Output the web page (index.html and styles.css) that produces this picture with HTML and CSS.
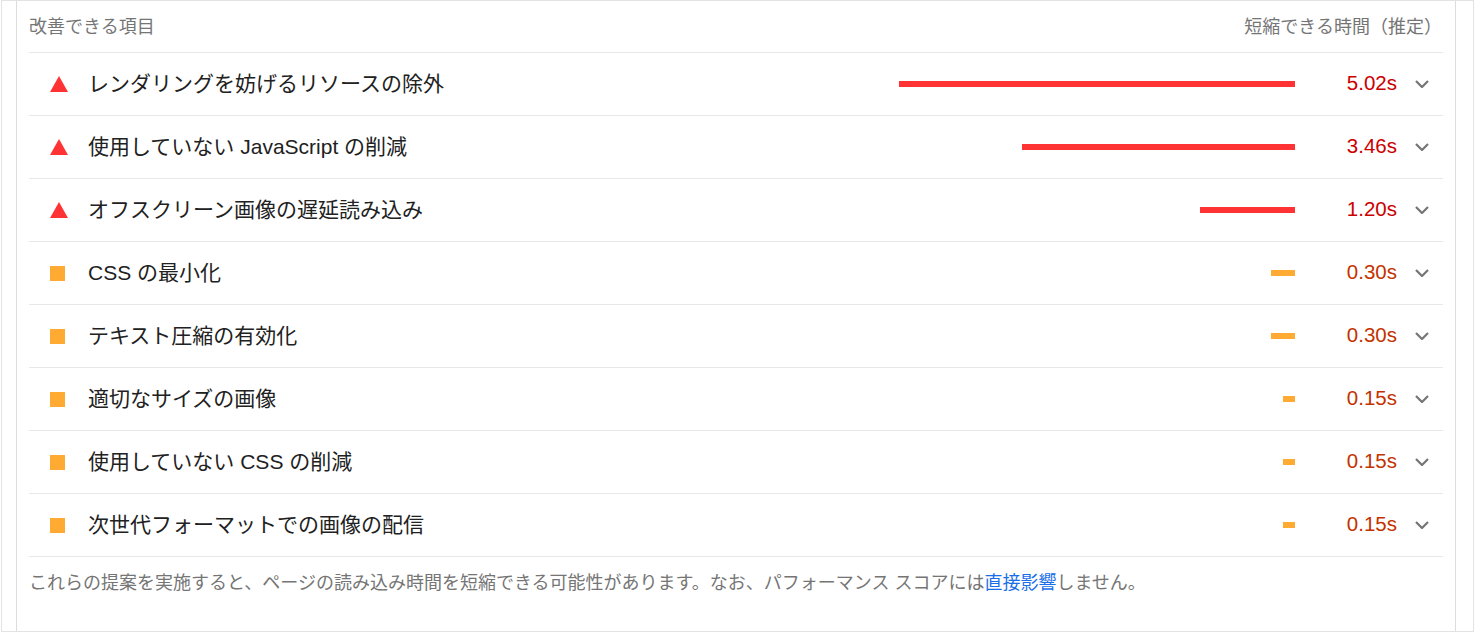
FILE: index.html
```html
<!DOCTYPE html>
<html lang="ja">
<head>
<meta charset="utf-8">
<title>改善できる項目</title>
<link rel="stylesheet" href="styles.css">
</head>
<body>
<div class="frame">
  <div class="panel">
    <div class="head">
      <span class="head-left">改善できる項目</span>
      <span class="head-right">短縮できる時間（推定）</span>
    </div>

    <div class="row fail">
      <span class="icon"><svg width="18" height="16" viewBox="0 0 18 16"><polygon points="9,0 18,16 0,16"/></svg></span>
      <span class="title">レンダリングを妨げるリソースの除外</span>
      <span class="bar" style="width:396px"></span>
      <span class="value">5.02s</span>
      <span class="chev"><svg width="14" height="8" viewBox="0 0 14 8"><polyline points="1,1 7,7 13,1"/></svg></span>
    </div>

    <div class="row fail">
      <span class="icon"><svg width="18" height="16" viewBox="0 0 18 16"><polygon points="9,0 18,16 0,16"/></svg></span>
      <span class="title">使用していない JavaScript の削減</span>
      <span class="bar" style="width:273px"></span>
      <span class="value">3.46s</span>
      <span class="chev"><svg width="14" height="8" viewBox="0 0 14 8"><polyline points="1,1 7,7 13,1"/></svg></span>
    </div>

    <div class="row fail">
      <span class="icon"><svg width="18" height="16" viewBox="0 0 18 16"><polygon points="9,0 18,16 0,16"/></svg></span>
      <span class="title">オフスクリーン画像の遅延読み込み</span>
      <span class="bar" style="width:95px"></span>
      <span class="value">1.20s</span>
      <span class="chev"><svg width="14" height="8" viewBox="0 0 14 8"><polyline points="1,1 7,7 13,1"/></svg></span>
    </div>

    <div class="row avg">
      <span class="icon"><span class="square"></span></span>
      <span class="title">CSS の最小化</span>
      <span class="bar" style="width:24px"></span>
      <span class="value">0.30s</span>
      <span class="chev"><svg width="14" height="8" viewBox="0 0 14 8"><polyline points="1,1 7,7 13,1"/></svg></span>
    </div>

    <div class="row avg">
      <span class="icon"><span class="square"></span></span>
      <span class="title">テキスト圧縮の有効化</span>
      <span class="bar" style="width:24px"></span>
      <span class="value">0.30s</span>
      <span class="chev"><svg width="14" height="8" viewBox="0 0 14 8"><polyline points="1,1 7,7 13,1"/></svg></span>
    </div>

    <div class="row avg">
      <span class="icon"><span class="square"></span></span>
      <span class="title">適切なサイズの画像</span>
      <span class="bar" style="width:12px"></span>
      <span class="value">0.15s</span>
      <span class="chev"><svg width="14" height="8" viewBox="0 0 14 8"><polyline points="1,1 7,7 13,1"/></svg></span>
    </div>

    <div class="row avg">
      <span class="icon"><span class="square"></span></span>
      <span class="title">使用していない CSS の削減</span>
      <span class="bar" style="width:12px"></span>
      <span class="value">0.15s</span>
      <span class="chev"><svg width="14" height="8" viewBox="0 0 14 8"><polyline points="1,1 7,7 13,1"/></svg></span>
    </div>

    <div class="row avg">
      <span class="icon"><span class="square"></span></span>
      <span class="title">次世代フォーマットでの画像の配信</span>
      <span class="bar" style="width:12px"></span>
      <span class="value">0.15s</span>
      <span class="chev"><svg width="14" height="8" viewBox="0 0 14 8"><polyline points="1,1 7,7 13,1"/></svg></span>
    </div>

    <div class="foot">これらの提案を実施すると、ページの読み込み時間を短縮できる可能性があります。なお、パフォーマンス スコアには<a class="link" href="#">直接影響</a>しません。</div>
  </div>
</div>
</body>
</html>
```

FILE: styles.css
```css
html, body {
  margin: 0;
  padding: 0;
  background: #fff;
}

body {
  font-family: "Liberation Sans", "Noto Sans CJK JP", sans-serif;
}

.frame {
  margin-left: 1px;
  width: 1471px;
  height: 630px;
  border: 1px solid #e3e3e3;
  box-sizing: content-box;
}

.panel {
  margin-left: 14px;
  width: 1414px;
  height: 630px;
  border-left: 1px solid #dcdcdc;
  border-right: 1px solid #dcdcdc;
  padding: 0 12px 0 12px;
  box-sizing: content-box;
}

.head {
  display: flex;
  justify-content: space-between;
  align-items: center;
  height: 51px;
  border-bottom: 1px solid #e8e8e8;
  font-size: 18px;
  color: #757575;
  padding-right: 1px;
}

.head-left,
.head-right {
  line-height: 24px;
  padding-top: 1px;
}

.row {
  display: flex;
  align-items: center;
  height: 62px;
  border-bottom: 1px solid #e8e8e8;
}

.icon {
  flex: none;
  width: 58px;
  display: flex;
  align-items: center;
  padding-left: 21px;
  box-sizing: border-box;
}

.icon svg {
  display: block;
}

.fail .icon svg polygon {
  fill: #ff3333;
}

.square {
  display: block;
  width: 15px;
  height: 15px;
  background: #ffaa33;
}

.title {
  flex: 1;
  font-size: 21px;
  color: #212121;
  line-height: 28px;
  padding-left: 1px;
}

.bar {
  flex: none;
  height: 6px;
}

.fail .bar {
  background: #ff3333;
}

.avg .bar {
  background: #ffaa33;
}

.value {
  flex: none;
  width: 102px;
  text-align: right;
  font-size: 20.5px;
  line-height: 28px;
  padding-bottom: 2px;
}

.fail .value {
  color: #cc0000;
}

.avg .value {
  color: #c33300;
}

.chev {
  flex: none;
  width: 46px;
  display: flex;
  align-items: center;
  padding-left: 18px;
  box-sizing: border-box;
}

.chev svg {
  display: block;
}

.chev polyline {
  fill: none;
  stroke: #757575;
  stroke-width: 2.2;
}

.foot {
  font-size: 18px;
  line-height: 24px;
  color: #757575;
  padding-top: 14px;
}

.link {
  color: #1a6fe8;
  text-decoration: none;
}
```
